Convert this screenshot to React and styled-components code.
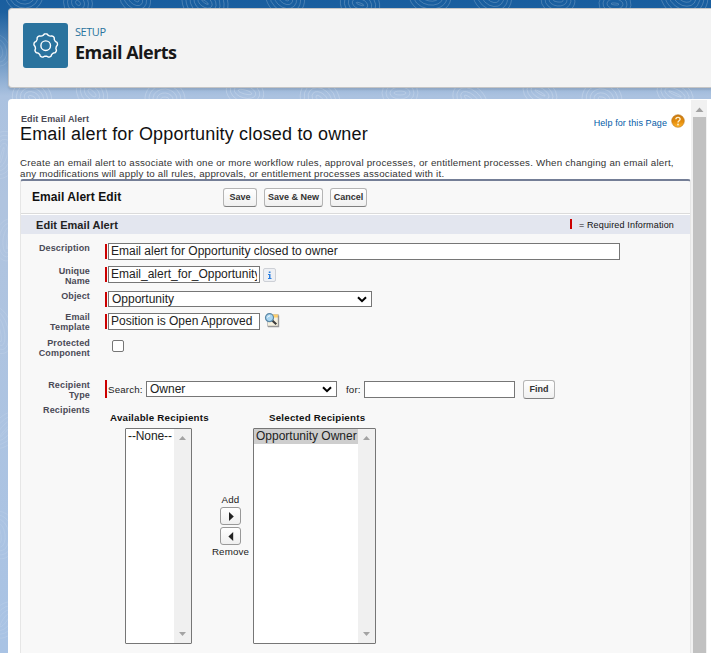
import React from "react";
import styled, { createGlobalStyle } from "styled-components";

const colors = {
  text: "#222",
  label: "#4a4a56",
  border: "#767676",
  panel: "#f8f8f8",
  required: "#c00",
  link: "#015ba7",
};

export default function App() {
  return (
    <Page>
      <GlobalStyle />
      <Contours />
      <Header>
        <HeaderIcon>
          <GearIcon />
        </HeaderIcon>
        <div>
          <Setup>SETUP</Setup>
          <HeaderTitle>Email Alerts</HeaderTitle>
        </div>
      </Header>
      <Frame>
        <Content>
          <TitleRow>
            <div>
              <PageType>Edit Email Alert</PageType>
              <PageTitle>Email alert for Opportunity closed to owner</PageTitle>
            </div>
            <Help href="#">
              Help for this Page
              <HelpIcon />
            </Help>
          </TitleRow>
          <Intro>
            <IntroLine>
              Create an email alert to associate with one or more workflow
              rules, approval processes, or entitlement processes. When changing
              an email alert,
            </IntroLine>
            <IntroLine>
              any modifications will apply to all rules, approvals, or
              entitlement processes associated with it.
            </IntroLine>
          </Intro>
          <Panel>
            <PanelHeader>
              <PanelTitle>Email Alert Edit</PanelTitle>
              <Button $w={34}>Save</Button>
              <Button $w={59}>Save &amp; New</Button>
              <Button $w={37}>Cancel</Button>
            </PanelHeader>
            <Band>
              <BandTitle>Edit Email Alert</BandTitle>
              <Legend>
                <LegendBar />= Required Information
              </Legend>
            </Band>
            <Row $h={30}>
              <Label $top={9}>Description</Label>
              <Field $top={9}>
                <Required />
                <Input $w={512}>Email alert for Opportunity closed to owner</Input>
              </Field>
            </Row>
            <Row $h={25}>
              <Label $top={2}>
                Unique
                <br />
                Name
              </Label>
              <Field $top={2}>
                <Required />
                <Input $w={152}>Email_alert_for_Opportunity</Input>
                <InfoIcon />
              </Field>
            </Row>
            <Row $h={22}>
              <Label $top={2}>Object</Label>
              <Field $top={2}>
                <Required />
                <Select $w={264}>
                  Opportunity
                  <Chevron />
                </Select>
              </Field>
            </Row>
            <Row $h={27}>
              <Label $top={1}>
                Email
                <br />
                Template
              </Label>
              <Field $top={2}>
                <Required />
                <Input $w={152}>Position is Open Approved</Input>
                <LookupIcon />
              </Field>
            </Row>
            <Row $h={42}>
              <Label>
                Protected
                <br />
                Component
              </Label>
              <Field $top={2}>
                <Checkbox />
              </Field>
            </Row>
            <Row $h={24}>
              <Label>
                Recipient
                <br />
                Type
              </Label>
              <SearchField>
                <Required $h={18} />
                <Small $w={38}>Search:</Small>
                <Select $w={191}>
                  Owner
                  <Chevron />
                </Select>
                <Small $w={27} $pad={9}>for:</Small>
                <Input $w={151} />
                <FindButton $w={32}>Find</FindButton>
              </SearchField>
            </Row>
            <Row $h={260}>
              <Label $top={1}>Recipients</Label>
              <Lists>
                <Column $w={99}>
                  <ListTitle>Available Recipients</ListTitle>
                  <ListBox $w={67}>
                    <Option>--None--</Option>
                    <ListScroll />
                  </ListBox>
                </Column>
                <Mover>
                  <span>Add</span>
                  <ArrowButton>
                    <Triangle d="M1 0L5.800 4.500L1 9Z" />
                  </ArrowButton>
                  <ArrowButton>
                    <Triangle d="M5.200 0L0.400 4.500L5.200 9Z" />
                  </ArrowButton>
                  <span>Remove</span>
                </Mover>
                <Column $w={127}>
                  <ListTitle>Selected Recipients</ListTitle>
                  <ListBox $w={123}>
                    <Option $selected>Opportunity Owner</Option>
                    <ListScroll />
                  </ListBox>
                </Column>
              </Lists>
            </Row>
          </Panel>
        </Content>
        <Scrollbar>
          <svg width="9" height="5" viewBox="0 0 9 5">
            <path d="M0.500 5L4.500 0.500L8.500 5Z" fill="#a3a3a3" />
          </svg>
          <Thumb />
        </Scrollbar>
      </Frame>
    </Page>
  );
}

// Topographic lines of the page background
function Contours() {
  const rings = (cx, cy, n, rx, ry) =>
    Array.from({ length: n }, (_, i) => (
      <ellipse
        key={`${cx}-${cy}-${i}`}
        cx={cx}
        cy={cy}
        rx={rx + i * 4}
        ry={ry + i * 4}
        transform={`rotate(${(cx * 7) % 50} ${cx} ${cy})`}
      />
    ));
  return (
    <ContourSvg width="711" height="653" fill="none" stroke="#fff">
      <g strokeOpacity="0.24" strokeWidth="0.8">
        {rings(24, -6, 5, 3, 2)}
        {rings(78, 3, 4, 3, 2)}
        {rings(135, -2, 4, 5, 2)}
        {rings(205, 2, 6, 4, 1)}
        {rings(285, -3, 5, 5, 2)}
        {rings(360, 4, 5, 4, 1)}
        {rings(430, -4, 5, 5, 1)}
        {rings(492, -5, 5, 5, 2)}
        {rings(558, 0, 4, 5, 2)}
        {rings(615, 4, 4, 4, 1)}
        {rings(684, -5, 6, 5, 2)}
        {rings(32, 98, 5, 4, 2)}
        {rings(92, 93, 4, 5, 2)}
        {rings(165, 99, 5, 4, 2)}
        {rings(245, 92, 4, 7, 2)}
        {rings(320, 99, 5, 5, 2)}
        {rings(400, 93, 4, 6, 2)}
        {rings(470, 100, 4, 7, 2)}
        {rings(540, 93, 4, 6, 1)}
        {rings(602, 99, 5, 4, 2)}
        {rings(675, 94, 4, 7, 1)}
      </g>
      <g strokeOpacity="0.12" strokeWidth="0.8">
        {rings(-4, 50, 4, 2, 5)}
        {rings(2, 155, 5, 1, 8)}
        {rings(8, 240, 4, 1, 9)}
        {rings(-2, 330, 4, 2, 12)}
        {rings(6, 430, 4, 1, 10)}
        {rings(-1, 535, 5, 2, 8)}
        {rings(5, 620, 4, 2, 8)}
      </g>
    </ContourSvg>
  );
}

function GearIcon() {
  const points = Array.from({ length: 144 }, (_, i) => {
    const a = (i / 144) * Math.PI * 2;
    const r = 11.2 + 0.7 * Math.tanh(1.8 * Math.cos(9 * a));
    return `${(13.7 + r * Math.sin(a)).toFixed(2)} ${(13.7 - r * Math.cos(a)).toFixed(2)}`;
  });
  return (
    <svg width="28" height="28" fill="none" stroke="#fff" strokeWidth="1.4">
      <path d={`M${points.join("L")}Z`} />
      <circle cx="13.700" cy="13.700" r="4.800" />
    </svg>
  );
}

function HelpIcon() {
  return (
    <svg width="14" height="14" viewBox="0 0 14 14">
      <defs>
        <linearGradient id="help" x1="0" y1="0" x2="0" y2="1">
          <stop offset="0" stopColor="#c8780f" />
          <stop offset="0.550" stopColor="#e58d0c" />
          <stop offset="1" stopColor="#ffb62e" />
        </linearGradient>
      </defs>
      <circle cx="7" cy="7" r="6.300" fill="url(#help)" stroke="#b8751c" strokeWidth="0.6" />
      <path
        d="M4.900 5.300C4.900 2.700 9.100 2.800 9.100 5.200C9.100 6.800 7 6.700 7 8.500"
        fill="none"
        stroke="#fff2cf"
        strokeWidth="1.4"
      />
      <circle cx="7" cy="10.500" r="0.900" fill="#fff2cf" />
    </svg>
  );
}

function InfoIcon() {
  return (
    <InfoSvg width="13" height="14" viewBox="0 0 13 14">
      <rect x="0.500" y="0.500" width="12" height="13" rx="1.500" fill="#eef0f4" stroke="#cdd0d6" />
      <path d="M5.800 3.500h1.700v1.500h-1.700zM5 6h2.500v4h1v1h-3.500v-1h1v-3h-1z" fill="#2b7fe0" />
    </InfoSvg>
  );
}

function LookupIcon() {
  return (
    <LookupSvg width="16" height="15" viewBox="0 0 16 15">
      <path d="M3.500 1.500h11v12h-11z" fill="#f6f1df" stroke="#c4c4c4" />
      <path d="M8 1.500h6v3h-6z" fill="#ffcf6b" />
      <path d="M4 13.500h10.500v-11" fill="none" stroke="#999" strokeWidth="1.4" />
      <path d="M8 7.300L12.300 11.300" stroke="#3c3c3c" strokeWidth="2.2" />
      <circle cx="5.500" cy="4.700" r="4" fill="#a9d6f2" stroke="#5b87a5" strokeWidth="1.2" />
      <path d="M3.500 4.500Q4 2.800 6 2.800" fill="none" stroke="#fff" />
    </LookupSvg>
  );
}

function Chevron() {
  return (
    <svg width="10" height="7" viewBox="0 0 10 7">
      <path d="M1 1.200L5 5.200L9 1.200" fill="none" stroke="#000" strokeWidth="2" />
    </svg>
  );
}

function Triangle({ d }) {
  return (
    <svg width="6" height="9" viewBox="0 0 6 9">
      <path d={d} fill="#222" />
    </svg>
  );
}

function ListScroll() {
  return (
    <ListTrack>
      <svg width="7" height="4" viewBox="0 0 7 4">
        <path d="M0 4L3.500 0L7 4Z" fill="#a3a3a3" />
      </svg>
      <svg width="7" height="4" viewBox="0 0 7 4">
        <path d="M0 0L3.500 4L7 0Z" fill="#a3a3a3" />
      </svg>
    </ListTrack>
  );
}

const GlobalStyle = createGlobalStyle`
  * {
    box-sizing: border-box;
  }
  body {
    margin: 0;
    overflow: hidden;
    font-family: "Liberation Sans", Arial, sans-serif;
    color: ${colors.text};
  }
`;

const Page = styled.div`
  position: relative;
  display: flex;
  flex-direction: column;
  gap: 11px;
  width: 711px;
  height: 653px;
  padding: 8px 0 0 8px;
  overflow: hidden;
  background: linear-gradient(#195e9f 0, #1c609f 12px, #abc2e0 96px, #b0c4df 200px, #a9c3e4 653px);
`;

const ContourSvg = styled.svg`
  position: absolute;
  top: 0;
  left: 0;
`;

const Header = styled.header`
  position: relative;
  display: flex;
  flex: none;
  gap: 7px;
  height: 80px;
  padding: 14px;
  background: #f3f3f3;
  border: 1px solid #c5c5c5;
  border-right: 0;
  border-radius: 4px 0 0 4px;
  box-shadow: 0 2px 2px rgba(0, 0, 0, 0.1);
`;

const HeaderIcon = styled.div`
  display: flex;
  align-items: center;
  justify-content: center;
  width: 45px;
  height: 45px;
  border-radius: 3px;
  background: #2a739e;
`;

const Setup = styled.div`
  padding-top: 1px;
  font: 11px/16px "Open Sans", sans-serif;
  letter-spacing: -0.45px;
  color: #2a739e;
`;

const HeaderTitle = styled.h1`
  margin: 0;
  font: bold 18px/25px "Open Sans", sans-serif;
  letter-spacing: -0.52px;
  color: #181818;
`;

const Frame = styled.main`
  position: relative;
  display: flex;
  flex: 1;
  min-height: 0;
  padding-right: 4px;
  background: #fff;
  border-radius: 4px 0 0 0;
`;

const Content = styled.div`
  flex: 1;
  padding: 14px 0 0 12px;
`;

const TitleRow = styled.div`
  display: flex;
  justify-content: space-between;
  height: 44px;
  padding-right: 6px;
`;

const PageType = styled.div`
  padding-left: 1px;
  font: bold 9px/12px "Liberation Sans", Arial, sans-serif;
  letter-spacing: 0.12px;
  color: ${colors.label};
`;

const PageTitle = styled.h2`
  margin: 0;
  font: 18px/18px "Liberation Sans", Arial, sans-serif;
  letter-spacing: 0.18px;
  white-space: nowrap;
  color: #111;
`;

const Help = styled.a`
  display: flex;
  align-items: center;
  gap: 4px;
  height: 18px;
  padding-top: 1px;
  font-size: 9px;
  letter-spacing: 0.1px;
  text-decoration: none;
  color: ${colors.link};

  svg {
    margin-bottom: 3px;
  }
`;

const Intro = styled.div`
  height: 22px;
`;

const IntroLine = styled.div`
  font-size: 9.75px;
  line-height: 11px;
  letter-spacing: 0.21px;
  white-space: nowrap;
  color: #333;
`;

const Panel = styled.section`
  height: 480px;
  background: ${colors.panel};
  border: 1px solid #e6e6e6;
  border-top: 2px solid #747e96;
  border-radius: 3px 3px 0 0;
`;

const PanelHeader = styled.div`
  display: flex;
  align-items: center;
  gap: 7px;
  height: 33px;
  margin-bottom: 1px;
  border-bottom: 1px solid #dbdbdb;
  box-shadow: 0 1px #fff;
`;

const PanelTitle = styled.h3`
  width: 195px;
  margin: 0;
  padding: 0 0 1px 11px;
  font-size: 12px;
  letter-spacing: 0.06px;
  color: #111;
`;

const Button = styled.button`
  width: ${({ $w }) => $w}px;
  height: 19px;
  padding: 0;
  border: 1px solid #b5b5b5;
  border-bottom-color: #7f7f7f;
  border-radius: 3px;
  background: linear-gradient(#fff, #f0f0f0);
  font: bold 9px/15px "Liberation Sans", Arial, sans-serif;
  white-space: nowrap;
  color: #333;
`;

const FindButton = styled(Button)`
  margin-left: 8px;
`;

const Band = styled.div`
  display: flex;
  align-items: center;
  justify-content: space-between;
  height: 19px;
  padding: 0 16px 0 15px;
  background: #e3e6ef;
`;

const BandTitle = styled.h3`
  margin: 0;
  font-size: 11px;
  letter-spacing: 0.06px;
  color: #222;
`;

const Legend = styled.div`
  display: flex;
  align-items: center;
  gap: 7px;
  font-size: 9px;
  letter-spacing: 0.15px;
  color: #111;
`;

const LegendBar = styled.span`
  width: 2px;
  height: 10px;
  margin-bottom: 1px;
  background: ${colors.required};
`;

const Row = styled.div`
  display: flex;
  height: ${({ $h }) => $h}px;
`;

const Label = styled.div`
  flex: none;
  width: 69px;
  padding-top: ${({ $top = 0 }) => $top}px;
  font: bold 9px/10px "Liberation Sans", Arial, sans-serif;
  letter-spacing: 0.14px;
  text-align: right;
  white-space: nowrap;
  color: ${colors.label};
`;

const Field = styled.div`
  display: flex;
  align-items: flex-start;
  padding: ${({ $top = 0 }) => $top}px 0 0 15px;
`;

const SearchField = styled(Field)`
  height: 19px;
  align-items: center;
`;

const Required = styled.span`
  width: 2px;
  height: ${({ $h = 15 }) => $h}px;
  margin: ${({ $h }) => ($h ? "0 1px 1px 0" : "1px 1px 0 0")};
  background: ${colors.required};
`;

const Input = styled.div`
  width: ${({ $w }) => $w}px;
  height: 17px;
  padding: 0 2px;
  overflow: clip;
  overflow-clip-margin: content-box;
  border: 1px solid ${colors.border};
  background: #fff;
  font-size: 12px;
  line-height: 15px;
  white-space: nowrap;
`;

const Select = styled(Input)`
  display: flex;
  align-items: center;
  justify-content: space-between;
  height: 16px;
  padding: 0 4px 0 3px;
  line-height: 14px;

  ${SearchField} & {
    margin-bottom: 1px;
  }
`;

const InfoSvg = styled.svg`
  margin: 2px 0 0 3px;
`;

const LookupSvg = styled.svg`
  margin: 0 0 0 4px;
`;

const Checkbox = styled.span`
  width: 12px;
  height: 12px;
  margin-left: 7px;
  border: 1px solid ${colors.border};
  border-radius: 2px;
  background: #fff;
`;

const Small = styled.span`
  width: ${({ $w }) => $w}px;
  padding: 0 0 1px ${({ $pad = 0 }) => $pad}px;
  font-size: 9.75px;
  letter-spacing: 0.15px;
  white-space: nowrap;
`;

const Lists = styled.div`
  display: flex;
  padding-left: 20px;
`;

const Column = styled.div`
  display: flex;
  flex: none;
  flex-direction: column;
  width: ${({ $w }) => $w}px;
  padding-top: 8px;
`;

const ListTitle = styled.div`
  height: 16px;
  align-self: flex-start;
  font: bold 9.75px/11px "Liberation Sans", Arial, sans-serif;
  letter-spacing: 0.22px;
  white-space: nowrap;
  color: #111;

  ${Column}:last-child & {
    margin-left: 16px;
  }
`;

const ListBox = styled.div`
  display: flex;
  width: ${({ $w }) => $w}px;
  height: 216px;
  border: 1px solid ${colors.border};
  border-radius: 1px;
  background: #fff;

  ${Column}:first-child & {
    margin-left: 15px;
  }
`;

const Option = styled.div`
  flex: 1;
  height: 15px;
  padding-left: 2px;
  background: ${({ $selected }) => ($selected ? "#cecece" : "transparent")};
  font-size: 12px;
  line-height: 15px;
  letter-spacing: ${({ $selected }) => ($selected ? 0 : -0.1)}px;
  white-space: nowrap;
`;

const ListTrack = styled.div`
  display: flex;
  flex: none;
  flex-direction: column;
  align-items: center;
  justify-content: space-between;
  width: 17px;
  padding: 7px 0;
  background: #f0f0f0;
`;

const Mover = styled.div`
  display: flex;
  flex: none;
  flex-direction: column;
  align-items: center;
  gap: 2px;
  width: 44px;
  padding: 90px 1px 0 0;
  font-size: 9.75px;
  line-height: 11px;
  letter-spacing: 0.15px;

  span:last-child {
    margin-top: -1px;
  }
`;

const ArrowButton = styled.button`
  display: flex;
  align-items: center;
  justify-content: center;
  width: 21px;
  height: 18px;
  padding: 0;
  border: 1px solid #999;
  border-radius: 3px;
  background: linear-gradient(#fff, #efefef);
`;

const Scrollbar = styled.div`
  display: flex;
  flex: none;
  flex-direction: column;
  align-items: center;
  gap: 5px;
  width: 16px;
  margin-top: 1px;
  padding-top: 7px;
  background: #f1f1f1;
`;

const Thumb = styled.div`
  width: 13px;
  height: 541px;
  background: #c1c1c1;
`;
